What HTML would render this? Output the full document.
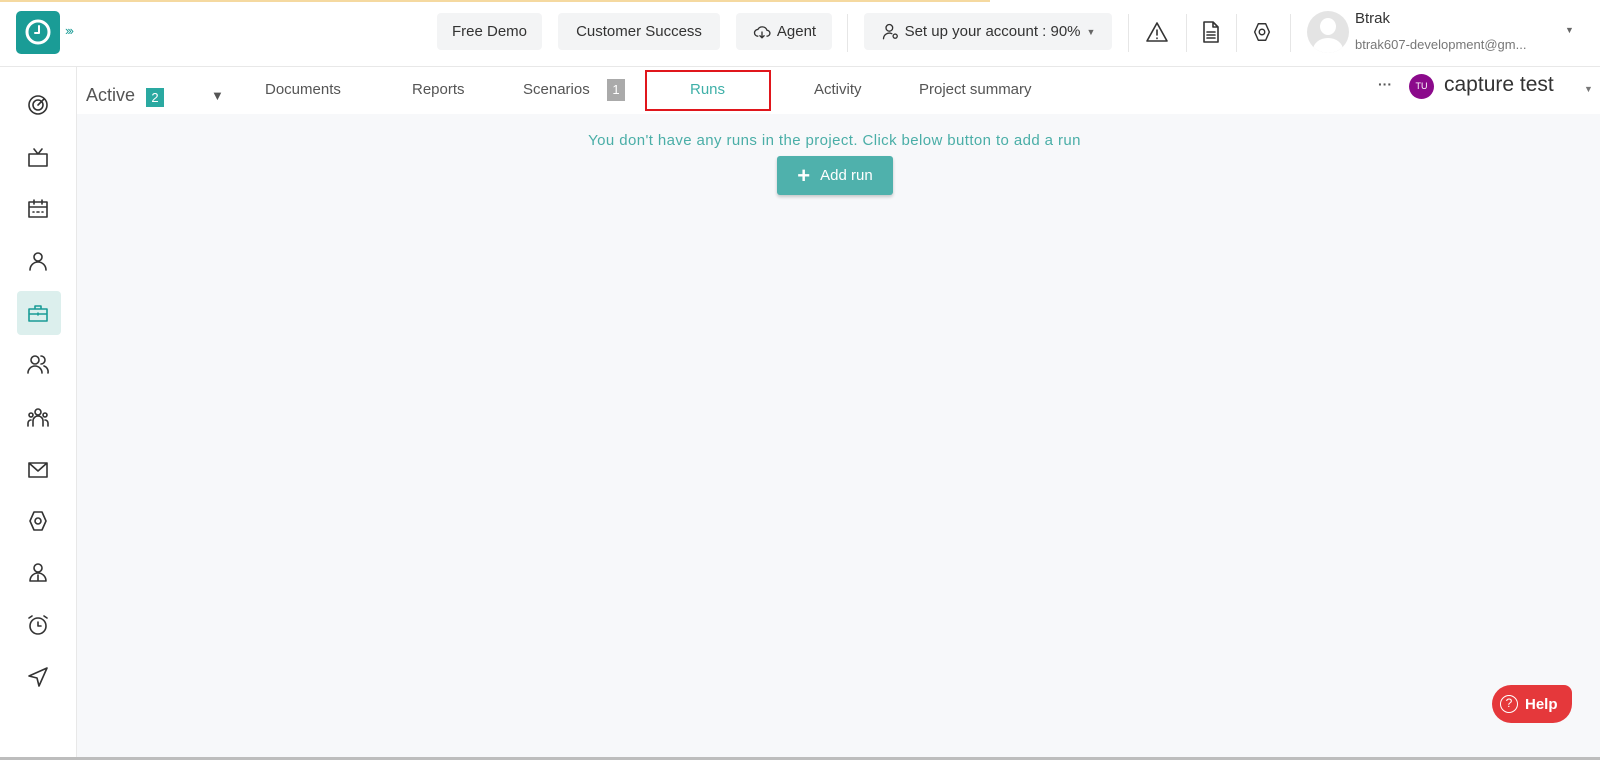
<!DOCTYPE html>
<html><head><meta charset="utf-8"><style>
*{box-sizing:border-box;margin:0;padding:0}
body{width:1600px;height:760px;overflow:hidden;background:#fff;font-family:"Liberation Sans",sans-serif;position:relative;color:#333}
.abs{position:absolute}
.btn{position:absolute;top:13px;height:37px;background:#f3f4f5;border-radius:4px;font-size:15px;color:#333;display:flex;align-items:center;justify-content:center}
.sep{position:absolute;top:14px;width:1px;height:38px;background:#e6e6e6}
.tab{position:absolute;top:81px;font-size:15px;color:#555}
.si{position:absolute;left:26px;width:24px;height:24px}
svg{fill:none;stroke:#333;stroke-width:1.6;stroke-linecap:round;stroke-linejoin:round}
</style></head><body>
<div class="abs" style="left:0;top:0;width:990px;height:2px;background:#f5d9a0"></div>
<div class="abs" style="left:0;top:66px;width:1600px;height:1px;background:#e8e8e8"></div>
<div class="abs" style="left:76px;top:67px;width:1px;height:693px;background:#e8e8e8"></div>
<div class="abs" style="left:77px;top:114px;width:1523px;height:643px;background:#f7f8fa"></div>
<div class="abs" style="left:0;top:757px;width:1600px;height:3px;background:#bdbdbd"></div>
<!-- logo -->
<div class="abs" style="left:16px;top:11px;width:44px;height:43px;background:#1a9c96;border-radius:5px"></div>
<svg class="abs" style="left:22px;top:16px;stroke:#fff;stroke-width:3" width="32" height="32" viewBox="0 0 32 32"><circle cx="16" cy="16" r="11"/><path d="M17 10v7h-4" stroke-width="2"/></svg>
<div class="abs" style="left:65px;top:23px;font-size:13px;color:#1a9c96;letter-spacing:-2px">›››</div>
<!-- header buttons -->
<div class="btn" style="left:437px;width:105px">Free Demo</div>
<div class="btn" style="left:558px;width:162px">Customer Success</div>
<div class="btn" style="left:736px;width:96px"><svg width="20" height="20" viewBox="0 0 24 24" style="margin-right:5px"><path d="M7 17a4 4 0 0 1 0-8 6 6 0 0 1 11 1 3.5 3.5 0 0 1 0 7M12 12v7M9.5 16.5 12 19l2.5-2.5"/></svg>Agent</div>
<div class="sep" style="left:847px"></div>
<div class="btn" style="left:864px;width:248px"><svg width="20" height="20" viewBox="0 0 24 24" style="margin-right:4px"><circle cx="10" cy="7" r="4"/><path d="M3 20a7 7 0 0 1 10-6"/><circle cx="17" cy="17" r="2.5"/></svg>Set up your account : 90% <span style="font-size:9px;margin-left:6px;color:#666">▼</span></div>
<div class="sep" style="left:1128px"></div><div class="sep" style="left:1186px"></div><div class="sep" style="left:1236px"></div><div class="sep" style="left:1290px"></div>
<svg class="abs" style="left:1145px;top:20px" width="24" height="24" viewBox="0 0 24 24"><path d="M12 3 2 21h20zM12 10v5M12 18v.5"/></svg>
<svg class="abs" style="left:1199px;top:20px" width="24" height="24" viewBox="0 0 24 24"><path d="M5 2h9l5 5v15H5zM14 2v5h5M8 12h8M8 15h8M8 18h8"/></svg>
<svg class="abs" style="left:1251px;top:21px" width="22" height="22" viewBox="0 0 24 24"><path d="M8 3h8l4 9-4 9H8l-4-9z"/><circle cx="12" cy="12" r="3"/></svg>
<div class="abs" style="left:1307px;top:11px;width:42px;height:42px;border-radius:50%;background:#e4e4e4;overflow:hidden"><div class="abs" style="left:13px;top:7px;width:16px;height:17px;border-radius:50%;background:#fff"></div><div class="abs" style="left:6px;top:27px;width:30px;height:24px;border-radius:50%;background:#fff"></div></div>
<div class="abs" style="left:1355px;top:10px;font-size:15px;color:#333">Btrak</div>
<div class="abs" style="left:1355px;top:37px;font-size:13px;color:#777">btrak607-development@gm...</div>
<div class="abs" style="left:1565px;top:25px;font-size:9px;color:#666">▼</div>
<!-- tabs -->
<div class="abs" style="left:86px;top:85px;font-size:18px;color:#555">Active</div>
<div class="abs" style="left:146px;top:88px;width:18px;height:19px;background:#2aa9a1;color:#fff;font-size:13px;text-align:center;line-height:19px">2</div>
<div class="abs" style="left:211px;top:88px;font-size:13px;color:#555">▼</div>
<div class="tab" style="left:265px">Documents</div>
<div class="tab" style="left:412px">Reports</div>
<div class="tab" style="left:523px">Scenarios</div>
<div class="abs" style="left:607px;top:79px;width:18px;height:22px;background:#aaa;color:#fff;font-size:13px;text-align:center;line-height:22px">1</div>
<div class="abs" style="left:645px;top:70px;width:126px;height:41px;border:2px solid #e0161c"></div>
<div class="tab" style="left:690px;color:#3fb0a8">Runs</div>
<div class="tab" style="left:814px">Activity</div>
<div class="tab" style="left:919px">Project summary</div>
<div class="abs" style="left:1378px;top:76px;font-size:14px;color:#555;font-weight:bold">···</div>
<div class="abs" style="left:1409px;top:74px;width:25px;height:25px;border-radius:50%;background:#8b0a8b;color:#fff;font-size:9px;text-align:center;line-height:25px">TU</div>
<div class="abs" style="left:1444px;top:73px;font-size:21px;color:#333">capture test</div>
<div class="abs" style="left:1584px;top:84px;font-size:9px;color:#777">▼</div>
<!-- content -->
<div class="abs" style="left:0;width:1600px;top:132px;text-align:center;padding-left:69px;font-size:15px;color:#4aaea7;letter-spacing:.4px">You don't have any runs in the project. Click below button to add a run</div>
<div class="abs" style="left:777px;top:156px;width:116px;height:39px;background:#4fb1ac;border-radius:3px;box-shadow:0 2px 3px rgba(0,0,0,.2);color:#fff;font-size:15px;display:flex;align-items:center;justify-content:center"><span style="font-size:22px;margin-right:10px;font-weight:bold">+</span>Add run</div>
<!-- sidebar -->
<div class="abs" style="left:17px;top:291px;width:44px;height:44px;background:#dcefed;border-radius:4px"></div>
<svg class="si" style="top:93px" viewBox="0 0 24 24"><circle cx="12" cy="12" r="9"/><circle cx="12" cy="12" r="5"/><path d="M12 12 18 6"/></svg>
<svg class="si" style="top:146px" viewBox="0 0 24 24"><path d="M3 8h18v12H3zM8 3l4 5 4-5"/></svg>
<svg class="si" style="top:197px" viewBox="0 0 24 24"><path d="M3 5h18v15H3zM3 10h18M8 3v4M16 3v4M7 15h1M11 15h2M16 15h1"/></svg>
<svg class="si" style="top:249px" viewBox="0 0 24 24"><circle cx="12" cy="8" r="4"/><path d="M4 21a8 8 0 0 1 16 0"/></svg>
<svg class="si" style="top:301px;stroke:#1a9c96" viewBox="0 0 24 24"><path d="M3 8h18v12H3zM9 8V5h6v3M3 13h18M12 12v2"/></svg>
<svg class="si" style="top:352px" viewBox="0 0 24 24"><circle cx="9" cy="8" r="4"/><path d="M2 21a7 7 0 0 1 14 0M15 4a4 4 0 0 1 0 8M18 14a6 6 0 0 1 4 7"/></svg>
<svg class="si" style="top:406px" viewBox="0 0 24 24"><circle cx="12" cy="6" r="3"/><circle cx="5" cy="9" r="2"/><circle cx="19" cy="9" r="2"/><path d="M7 20v-5a5 5 0 0 1 10 0v5M2 20v-3a3 3 0 0 1 3-3M22 20v-3a3 3 0 0 0-3-3"/></svg>
<svg class="si" style="top:458px" viewBox="0 0 24 24"><path d="M3 5h18v14H3zM3 5l9 8 9-8"/></svg>
<svg class="si" style="top:509px" viewBox="0 0 24 24"><path d="M8 3h8l4 9-4 9H8l-4-9z"/><circle cx="12" cy="12" r="3"/></svg>
<svg class="si" style="top:561px" viewBox="0 0 24 24"><circle cx="12" cy="7" r="4"/><path d="M4 20a8 8 0 0 1 16 0zM12 14v6"/></svg>
<svg class="si" style="top:613px" viewBox="0 0 24 24"><circle cx="12" cy="13" r="8"/><path d="M12 9v4h3M3 5l3-2M21 5l-3-2"/></svg>
<svg class="si" style="top:665px" viewBox="0 0 24 24"><path d="M21 3 3 11l8 2 2 8z"/></svg>
<!-- help -->
<div class="abs" style="left:1492px;top:685px;width:80px;height:38px;background:#e5383b;border-radius:19px 8px 19px 19px;color:#fff;font-weight:bold;font-size:15px;display:flex;align-items:center;padding-left:8px"><span style="display:inline-block;width:18px;height:18px;border:1.5px solid #fff;border-radius:50%;font-size:12px;text-align:center;line-height:15px;margin-right:7px;font-weight:normal">?</span>Help</div>
</body></html>
